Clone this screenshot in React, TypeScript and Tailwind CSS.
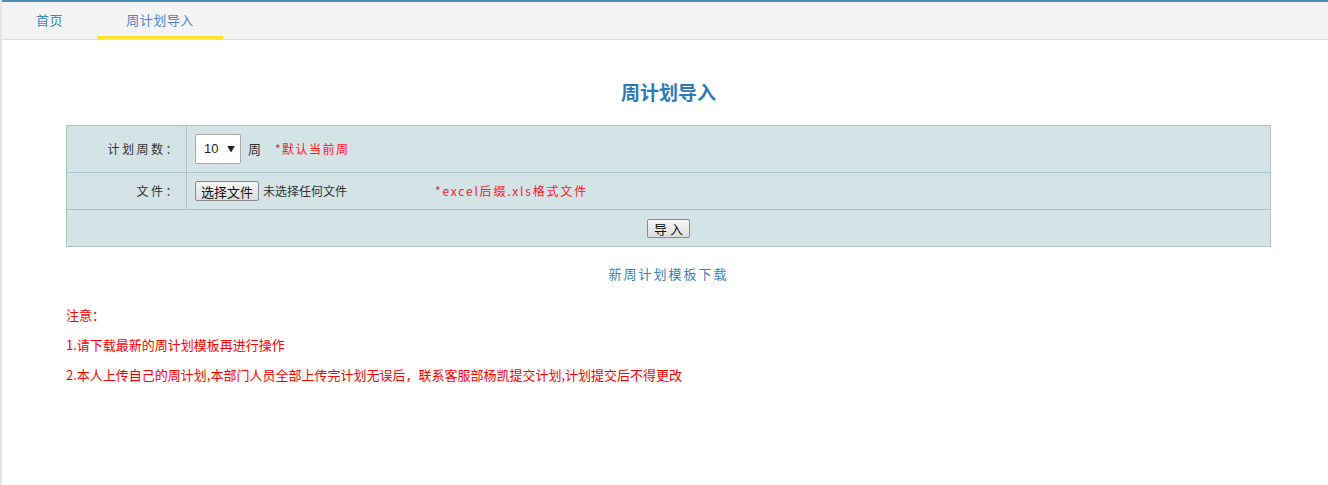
import { useState } from "react";

const cjk = '"Noto Sans CJK SC", "Noto Sans", sans-serif';

export default function App() {
  const [week, setWeek] = useState("10");

  return (
    <div
      className="min-h-[485px] bg-white border-l-2 border-[#e4e4e4]"
      style={{ fontFamily: cjk }}
    >
      {/* top tabs */}
      <div className="h-10 border-t-2 border-[#4a8db8] bg-[#f4f4f4] border-b border-b-[#dedede] flex items-end">
        <div className="w-[95px] h-[37px] flex items-center justify-center text-[13px] text-[#3a8ad0] pb-[2px] tracking-[0.5px]">
          首页
        </div>
        <div className="w-[126px] h-[37px] flex items-center justify-center text-[13px] text-[#4a88c4] border-b-[3px] border-[#ffe22e] pt-[1px] tracking-[0.5px]">
          周计划导入
        </div>
      </div>

      <div className="pl-[64px] pr-[57px]">
        <h1 className="text-center text-[19px] font-bold text-[#2e7ab8] mt-[39px] mb-[20px] leading-[26px]">
          周计划导入
        </h1>

        <div className="border border-[#a8c8c8] bg-[#d3e3e6] text-[12px] text-[#333]">
          <div className="flex h-[47px] border-b border-[#a8c8c8]">
            <div className="w-[120px] border-r border-[#a8c8c8] flex items-center justify-end pr-[6px] tracking-[2.5px]">
              计划周数：
            </div>
            <div className="flex items-center pl-[8px]">
              <div className="relative w-[46px] h-[30px]">
                <select
                  value={week}
                  onChange={(e) => setWeek(e.target.value)}
                  className="appearance-none w-full h-full bg-white border border-[#a9a9a9] rounded-[2px] pl-[8px] text-[13px] text-[#222] outline-none"
                  style={{ fontFamily: '"Liberation Sans", Arial, sans-serif' }}
                >
                  {Array.from({ length: 20 }, (_, i) => i + 1).map((n) => (
                    <option key={n} value={String(n)}>
                      {n}
                    </option>
                  ))}
                </select>
                <span className="pointer-events-none absolute right-[6px] top-[9px] text-[8px] text-[#222]">
                  ▼
                </span>
              </div>
              <span className="ml-[7px] text-[13px]">周</span>
              <span className="ml-[14px] text-[12px] text-[#ff1a1a] tracking-[1.5px]">
                *默认当前周
              </span>
            </div>
          </div>

          <div className="flex h-[37px] border-b border-[#a8c8c8]">
            <div className="w-[120px] border-r border-[#a8c8c8] flex items-center justify-end pr-[6px] tracking-[2.5px]">
              文件：
            </div>
            <div className="flex items-center pl-[8px]">
              <button className="h-[20px] px-[5px] border border-[#8a8a8a] rounded-[2px] bg-gradient-to-b from-[#f6f6f6] to-[#dddddd] text-[13px] text-[#111] leading-none">
                选择文件
              </button>
              <span className="ml-[4px] text-[12px] text-[#333] w-[172px]">未选择任何文件</span>
              <span className="text-[12px] text-[#ff1a1a] tracking-[1.8px]">
                *excel后缀.xls格式文件
              </span>
            </div>
          </div>

          <div className="flex h-[36px] items-center justify-center">
            <button className="h-[19px] w-[43px] border border-[#8a8a8a] rounded-[2px] bg-gradient-to-b from-[#f6f6f6] to-[#dddddd] text-[13px] text-[#111] leading-none">
              导 入
            </button>
          </div>
        </div>

        <div className="text-center mt-[17px] text-[13px] text-[#3d7fb8] tracking-[2px]">
          新周计划模板下载
        </div>

        <div className="mt-[21px] text-[13px] text-[#ff0000] flex flex-col gap-[11px] leading-[19px]">
          <p>注意：</p>
          <p>1.请下载最新的周计划模板再进行操作</p>
          <p>2.本人上传自己的周计划,本部门人员全部上传完计划无误后，联系客服部杨凯提交计划,计划提交后不得更改</p>
        </div>
      </div>
    </div>
  );
}
